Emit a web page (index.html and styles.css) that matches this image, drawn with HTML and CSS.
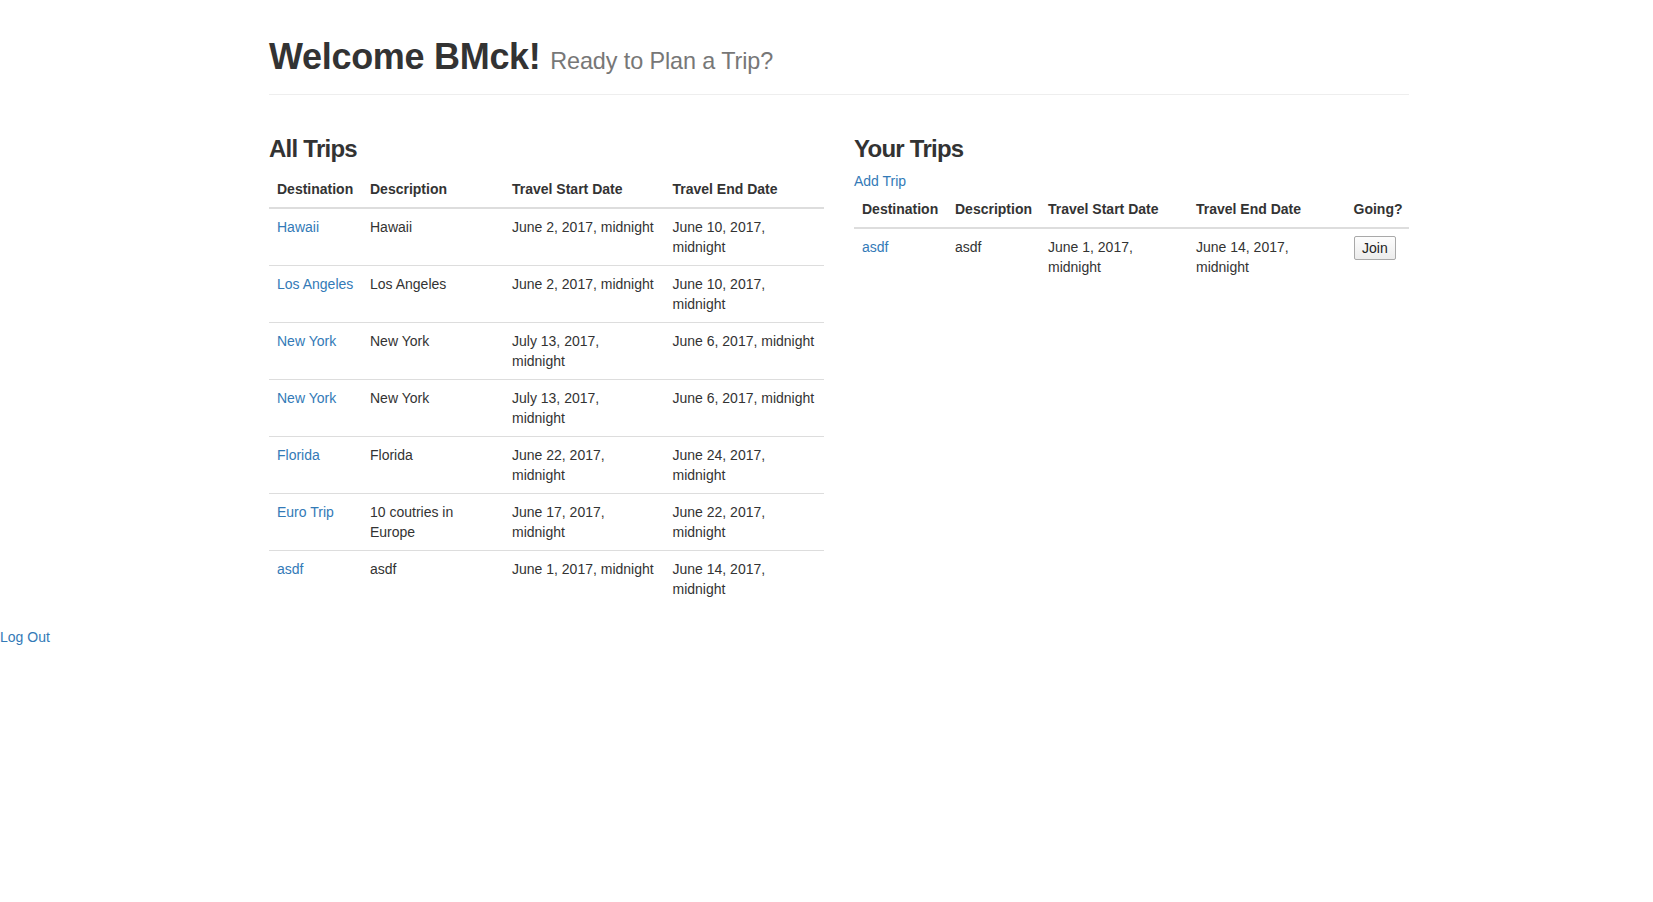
FILE: index.html
```html
<!DOCTYPE html>
<html lang="en">
<head>
<meta charset="utf-8">
<title>Trips</title>
<link rel="stylesheet" href="styles.css">
</head>
<body>
<div class="container">
  <div class="page-header">
    <h1>Welcome BMck! <small>Ready to Plan a Trip?</small></h1>
  </div>
  <div class="row">
    <div class="col">
      <h3>All Trips</h3>
      <table class="table">
        <colgroup>
          <col class="a1"><col class="a2"><col class="a3"><col class="a4">
        </colgroup>
        <thead>
          <tr><th>Destination</th><th>Description</th><th>Travel Start Date</th><th>Travel End Date</th></tr>
        </thead>
        <tbody>
          <tr><td><a href="#">Hawaii</a></td><td>Hawaii</td><td class="start">June 2, 2017, midnight</td><td>June 10, 2017, midnight</td></tr>
          <tr><td><a href="#">Los Angeles</a></td><td>Los Angeles</td><td class="start">June 2, 2017, midnight</td><td>June 10, 2017, midnight</td></tr>
          <tr><td><a href="#">New York</a></td><td>New York</td><td class="start">July 13, 2017, midnight</td><td>June 6, 2017, midnight</td></tr>
          <tr><td><a href="#">New York</a></td><td>New York</td><td class="start">July 13, 2017, midnight</td><td>June 6, 2017, midnight</td></tr>
          <tr><td><a href="#">Florida</a></td><td>Florida</td><td class="start">June 22, 2017, midnight</td><td>June 24, 2017, midnight</td></tr>
          <tr><td><a href="#">Euro Trip</a></td><td>10 coutries in Europe</td><td class="start">June 17, 2017, midnight</td><td>June 22, 2017, midnight</td></tr>
          <tr><td><a href="#">asdf</a></td><td>asdf</td><td class="start">June 1, 2017, midnight</td><td>June 14, 2017, midnight</td></tr>
        </tbody>
      </table>
    </div>
    <div class="col">
      <h3>Your Trips</h3>
      <a href="#">Add Trip</a>
      <table class="table">
        <colgroup>
          <col class="b1"><col class="b2"><col class="b3"><col class="b4"><col class="b5">
        </colgroup>
        <thead>
          <tr><th>Destination</th><th>Description</th><th>Travel Start Date</th><th>Travel End Date</th><th>Going?</th></tr>
        </thead>
        <tbody>
          <tr><td><a href="#">asdf</a></td><td>asdf</td><td>June 1, 2017, midnight</td><td>June 14, 2017, midnight</td><td><button class="btn" type="button">Join</button></td></tr>
        </tbody>
      </table>
    </div>
  </div>
</div>
<a href="#" class="logout">Log Out</a>
</body>
</html>
```

FILE: styles.css
```css
html, body {
  margin: 0;
  padding: 0;
  background: #fff;
}
body {
  font-family: "Liberation Sans", Arial, Helvetica, sans-serif;
  font-size: 14px;
  line-height: 20px;
  color: #333;
}
a {
  color: #337ab7;
  text-decoration: none;
}
.container {
  width: 1140px;
  padding: 0 15px;
  margin-left: 254px;
}
.page-header {
  margin: 37px 0 20px;
  padding-bottom: 7px;
  border-bottom: 1px solid #eee;
}
h1 {
  margin: 0 0 10px;
  font-size: 36px;
  line-height: 39.6px;
  font-weight: 700;
  letter-spacing: -0.3px;
  color: #333;
}
h1 small {
  font-size: 23.4px;
  font-weight: 400;
  line-height: 1;
  letter-spacing: -0.1px;
  color: #777;
}
.row {
  display: flex;
  gap: 30px;
}
.col {
  flex: 0 0 555px;
  width: 555px;
}
h3 {
  margin: 21px 0 9px;
  font-size: 24px;
  line-height: 26.4px;
  font-weight: 700;
  letter-spacing: -0.75px;
  color: #333;
}
.table {
  width: 100%;
  table-layout: fixed;
  border-collapse: collapse;
  border-spacing: 0;
  margin-bottom: 20px;
}
.table th {
  text-align: left;
  font-weight: 700;
  padding: 8px;
  vertical-align: bottom;
  border-bottom: 2px solid #ddd;
}
.table td {
  padding: 8px;
  vertical-align: top;
  border-top: 1px solid #ddd;
}
.table td.start {
  padding-right: 10px;
}
.table tbody tr:first-child td {
  border-top: 0;
}
.a1 { width: 93px; }
.a2 { width: 142px; }
.a3 { width: 160.5px; }
.a4 { width: 159.5px; }
.b1 { width: 93px; }
.b2 { width: 93px; }
.b3 { width: 148px; }
.b4 { width: 157.5px; }
.b5 { width: 63.5px; }
.btn {
  font-family: "Liberation Sans", Arial, Helvetica, sans-serif;
  font-size: 14px;
  line-height: 20px;
  color: #222;
  padding: 1px 7.5px;
  margin-top: -1px;
  border: 1px solid #a9a9a9;
  border-radius: 2px;
  background: linear-gradient(#fdfdfd, #ececec);
  vertical-align: top;
}
.logout {
  display: block;
  width: max-content;
}
```
